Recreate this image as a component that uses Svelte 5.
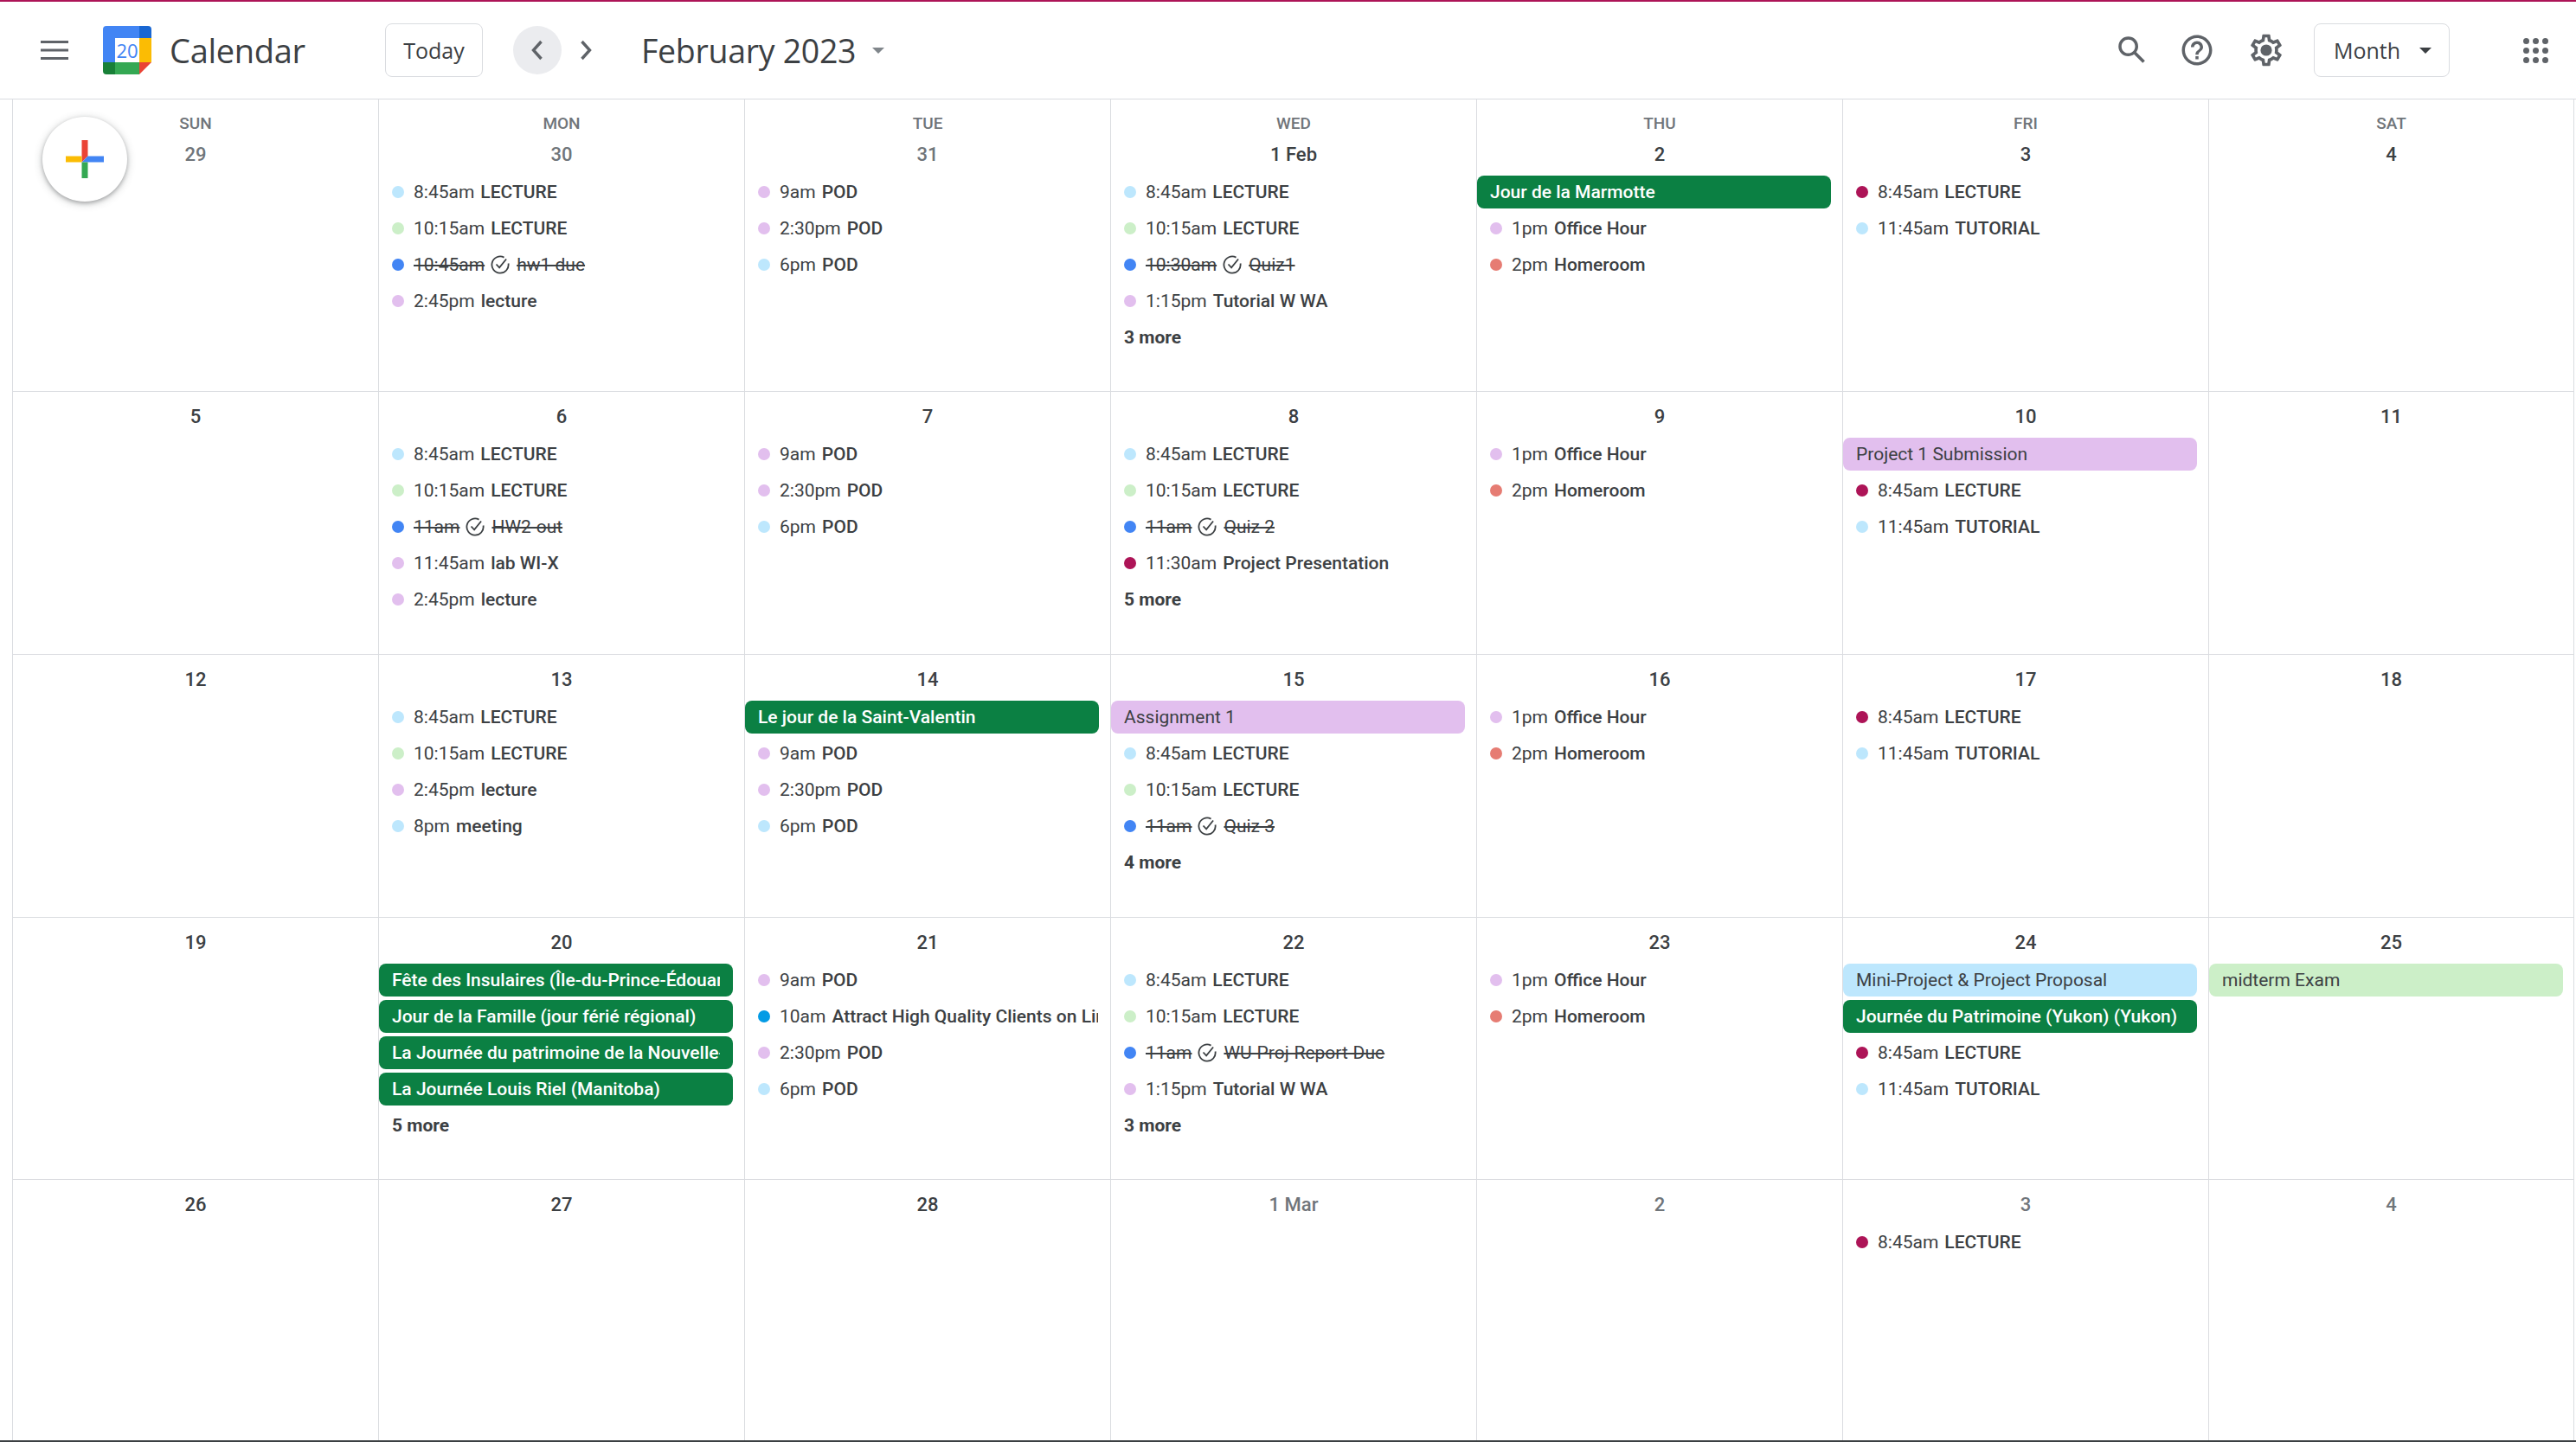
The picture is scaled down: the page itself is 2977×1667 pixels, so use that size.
<script>
    const LIGHTBLUE = '#bde7fd';
    const GREEN = '#ccefc8';
    const LILAC = '#e2bfee';
    const BANK = '#0b8043';
    const RASP = '#ad1457';
    const FLAMINGO = '#e67c73';
    const PEACOCK = '#039be5';

    const ev = (color, time, title) => ({ kind: 'event', color, time, title });
    const task = (time, title) => ({ kind: 'task', time, title });
    const chip = (color, title, dark = false) => ({ kind: 'chip', color, title, dark });
    const more = (n) => ({ kind: 'more', title: n + ' more' });

    const lec1 = ev(LIGHTBLUE, '8:45am', 'LECTURE');
    const lec2 = ev(GREEN, '10:15am', 'LECTURE');
    const lecR = ev(RASP, '8:45am', 'LECTURE');
    const tut = ev(LIGHTBLUE, '11:45am', 'TUTORIAL');
    const pod1 = ev(LILAC, '9am', 'POD');
    const pod2 = ev(LILAC, '2:30pm', 'POD');
    const pod3 = ev(LIGHTBLUE, '6pm', 'POD');
    const lecture = ev(LILAC, '2:45pm', 'lecture');
    const office = ev(LILAC, '1pm', 'Office Hour');
    const home = ev(FLAMINGO, '2pm', 'Homeroom');
    const tutW = ev(LILAC, '1:15pm', 'Tutorial W WA');

    const days = [
        { label: '29', dim: true, events: [] },
        { label: '30', dim: true, events: [lec1, lec2, task('10:45am', 'hw1 due'), lecture] },
        { label: '31', dim: true, events: [pod1, pod2, pod3] },
        { label: '1 Feb', events: [lec1, lec2, task('10:30am', 'Quiz1'), tutW, more(3)] },
        { label: '2', events: [chip(BANK, 'Jour de la Marmotte', true), office, home] },
        { label: '3', events: [lecR, tut] },
        { label: '4', events: [] },

        { label: '5', events: [] },
        { label: '6', events: [lec1, lec2, task('11am', 'HW2-out'), ev(LILAC, '11:45am', 'lab WI-X'), lecture] },
        { label: '7', events: [pod1, pod2, pod3] },
        { label: '8', events: [lec1, lec2, task('11am', 'Quiz 2'), ev(RASP, '11:30am', 'Project Presentation'), more(5)] },
        { label: '9', events: [office, home] },
        { label: '10', events: [chip(LILAC, 'Project 1 Submission'), lecR, tut] },
        { label: '11', events: [] },

        { label: '12', events: [] },
        { label: '13', events: [lec1, lec2, lecture, ev(LIGHTBLUE, '8pm', 'meeting')] },
        { label: '14', events: [chip(BANK, 'Le jour de la Saint-Valentin', true), pod1, pod2, pod3] },
        { label: '15', events: [chip(LILAC, 'Assignment 1'), lec1, lec2, task('11am', 'Quiz 3'), more(4)] },
        { label: '16', events: [office, home] },
        { label: '17', events: [lecR, tut] },
        { label: '18', events: [] },

        { label: '19', events: [] },
        { label: '20', events: [
            chip(BANK, 'Fête des Insulaires (Île-du-Prince-Édouard)', true),
            chip(BANK, 'Jour de la Famille (jour férié régional)', true),
            chip(BANK, 'La Journée du patrimoine de la Nouvelle-Écosse', true),
            chip(BANK, 'La Journée Louis Riel (Manitoba)', true),
            more(5)
        ] },
        { label: '21', events: [pod1, ev(PEACOCK, '10am', 'Attract High Quality Clients on LinkedIn'), pod2, pod3] },
        { label: '22', events: [lec1, lec2, task('11am', 'WU-Proj-Report-Due'), tutW, more(3)] },
        { label: '23', events: [office, home] },
        { label: '24', events: [chip(LIGHTBLUE, 'Mini-Project & Project Proposal'), chip(BANK, 'Journée du Patrimoine (Yukon) (Yukon)', true), lecR, tut] },
        { label: '25', events: [chip(GREEN, 'midterm Exam')] },

        { label: '26', events: [] },
        { label: '27', events: [] },
        { label: '28', events: [] },
        { label: '1 Mar', dim: true, events: [] },
        { label: '2', dim: true, events: [] },
        { label: '3', dim: true, events: [lecR] },
        { label: '4', dim: true, events: [] }
    ];

    const weekdays = ['SUN', 'MON', 'TUE', 'WED', 'THU', 'FRI', 'SAT'];
</script>

<div class="page">
    <header class="topbar">
        <button class="icon-btn menu" aria-label="Main menu">
            <svg width="32" height="22" viewBox="0 0 32 22"><path d="M0 0h32v3H0zM0 9.5h32v3H0zM0 19h32v3H0z" fill="#5f6368" /></svg>
        </button>
        <svg class="logo" width="56" height="56" viewBox="0 0 56 56">
            <path d="M42 0H4a4 4 0 0 0-4 4v38h14V14h28z" fill="#4285f4" />
            <path d="M42 0h10a4 4 0 0 1 4 4v10H42z" fill="#1967d2" />
            <rect x="42" y="14" width="14" height="28" fill="#fbbc04" />
            <rect x="14" y="42" width="28" height="14" fill="#34a853" />
            <path d="M0 42h14v14H4a4 4 0 0 1-4-4z" fill="#188038" />
            <path d="M42 42h14L42 56z" fill="#ea4335" />
            <rect x="14" y="14" width="28" height="28" fill="#fff" />
            <text x="28" y="36.5" text-anchor="middle" font-size="22" fill="#4285f4" class="logo-num">20</text>
        </svg>
        <span class="brand">Calendar</span>
        <button class="outlined today">Today</button>
        <button class="icon-btn nav active" aria-label="Previous month">
            <svg width="14" height="24" viewBox="0 0 14 24"><path d="M11.5 2 2.5 12l9 10" fill="none" stroke="#5f6368" stroke-width="3.4" /></svg>
        </button>
        <button class="icon-btn nav next" aria-label="Next month">
            <svg width="14" height="24" viewBox="0 0 14 24"><path d="M2.5 2l9 10-9 10" fill="none" stroke="#5f6368" stroke-width="3.4" /></svg>
        </button>
        <span class="month-title">February 2023</span>
        <span class="caret grey"></span>

        <div class="spacer"></div>

        <svg class="tool search" width="42" height="42" viewBox="0 0 24 24"><path fill="#5f6368" d="M20.49 19l-5.73-5.73C15.53 12.2 16 10.91 16 9.5A6.5 6.5 0 1 0 9.5 16c1.41 0 2.7-.47 3.77-1.24L19 20.49 20.49 19zM5 9.5C5 7.01 7.01 5 9.5 5S14 7.01 14 9.5 11.99 14 9.5 14 5 11.99 5 9.5z" /></svg>
        <svg class="tool help" width="42" height="42" viewBox="0 0 24 24"><path fill="#5f6368" d="M11 18h2v-2h-2v2zm1-16C6.48 2 2 6.48 2 12s4.48 10 10 10 10-4.48 10-10S17.52 2 12 2zm0 18c-4.41 0-8-3.59-8-8s3.59-8 8-8 8 3.59 8 8-3.59 8-8 8zm0-14c-2.21 0-4 1.79-4 4h2c0-1.1.9-2 2-2s2 .9 2 2c0 2-3 1.75-3 5h2c0-2.25 3-2.5 3-5 0-2.21-1.79-4-4-4z" /></svg>
        <svg class="tool gear" width="44" height="44" viewBox="0 0 24 24"><path fill="#5f6368" d="M19.43 12.98c.04-.32.07-.64.07-.98s-.03-.66-.07-.98l2.11-1.65c.19-.15.24-.42.12-.64l-2-3.46c-.12-.22-.39-.3-.61-.22l-2.49 1c-.52-.4-1.08-.73-1.69-.98l-.38-2.65A.488.488 0 0 0 14 2h-4c-.25 0-.46.18-.49.42l-.38 2.65c-.61.25-1.17.59-1.69.98l-2.49-1c-.23-.09-.49 0-.61.22l-2 3.46c-.13.22-.07.49.12.64l2.11 1.65c-.04.32-.07.65-.07.98s.03.66.07.98l-2.11 1.65c-.19.15-.24.42-.12.64l2 3.46c.12.22.39.3.61.22l2.49-1c.52.4 1.08.73 1.69.98l.38 2.65c.03.24.24.42.49.42h4c.25 0 .46-.18.49-.42l.38-2.65c.61-.25 1.17-.59 1.69-.98l2.49 1c.23.09.49 0 .61-.22l2-3.46c.12-.22.07-.49-.12-.64l-2.11-1.65zM17.45 11.27c.04.31.05.52.05.73 0 .21-.02.43-.05.73l-.14 1.13.89.7 1.08.84-.7 1.21-1.27-.51-1.04-.42-.9.68c-.43.32-.84.56-1.25.73l-1.06.43-.16 1.13-.2 1.35h-1.4l-.19-1.35-.16-1.13-1.06-.43c-.43-.18-.83-.41-1.23-.71l-.91-.7-1.06.43-1.27.51-.7-1.21 1.08-.84.89-.7-.14-1.13c-.03-.31-.05-.54-.05-.74s.02-.43.05-.73l.14-1.13-.89-.7-1.08-.84.7-1.21 1.27.51 1.04.42.9-.68c.43-.32.84-.56 1.25-.73l1.06-.43.16-1.13.2-1.35h1.39l.19 1.35.16 1.13 1.06.43c.43.18.83.41 1.23.71l.91.7 1.06-.43 1.27-.51.7 1.21-1.07.85-.89.7.14 1.13z" /><circle cx="12" cy="12" r="3.6" fill="#5f6368" /></svg>

        <button class="outlined view">Month<span class="caret"></span></button>

        <svg class="tool apps" width="29" height="29" viewBox="0 0 29 29">
            {#each [3.5, 14.5, 25.5] as cy}
                {#each [3.5, 14.5, 25.5] as cx}
                    <circle {cx} {cy} r="3.5" fill="#5f6368" />
                {/each}
            {/each}
        </svg>
    </header>

    <main class="month">
        {#each days as day, i}
            <div class="cell" class:first-row={i < 7}>
                {#if i < 7}
                    <div class="weekday">{weekdays[i]}</div>
                {/if}
                <div class="date" class:dim={day.dim}>{day.label}</div>
                {#each day.events as e}
                    <div class="slot">
                        {#if e.kind === 'chip'}
                            <div class="chip" class:dark={e.dark} style="background: {e.color}"><div class="chip-text">{e.title}</div></div>
                        {:else if e.kind === 'more'}
                            <div class="more">{e.title}</div>
                        {:else if e.kind === 'task'}
                            <div class="row">
                                <span class="dot" style="background: #4285f4"></span>
                                <s class="time">{e.time}</s>
                                <svg class="check" width="22" height="22" viewBox="0 0 22 22">
                                    <path d="M15.5 2.6A9.6 9.6 0 1 0 20.5 9.5" fill="none" stroke="#3c4043" stroke-width="1.8" />
                                    <path d="M6.5 10.5l3.6 3.8 8-9.8" fill="none" stroke="#3c4043" stroke-width="1.8" />
                                </svg>
                                <s class="title done">{e.title}</s>
                            </div>
                        {:else}
                            <div class="row">
                                <span class="dot" style="background: {e.color}"></span>
                                <span class="time">{e.time}</span>
                                <span class="title">{e.title}</span>
                            </div>
                        {/if}
                    </div>
                {/each}
            </div>
        {/each}
    </main>

    <button class="fab" aria-label="Create">
        <svg width="44" height="44" viewBox="0 0 44 44">
            <path d="M18.5 0h7v18.5l-7 7z" fill="#ea4335" />
            <path d="M25.5 18.5H44v7H18.5z" fill="#4285f4" />
            <path d="M18.5 25.5h7V44h-7z" fill="#34a853" />
            <path d="M0 18.5h18.5v7H0z" fill="#fbbc04" />
        </svg>
    </button>
</div>

<style>
    :global(body) {
        margin: 0;
        background: #fff;
    }

    .page {
        position: relative;
        width: 2977px;
        height: 1667px;
        overflow: hidden;
        display: flex;
        flex-direction: column;
        box-sizing: border-box;
        border-bottom: 2px solid #3c4043;
        font-family: Roboto, "Liberation Sans", sans-serif;
        color: #3c4043;
    }

    button {
        font-family: inherit;
        padding: 0;
        border: none;
        background: none;
    }

    .topbar {
        flex: none;
        height: 115px;
        box-sizing: border-box;
        border-top: 2px solid #ad1457;
        border-bottom: 1px solid #dadce0;
        display: flex;
        align-items: center;
        padding: 0 0 0 47px;
    }

    .icon-btn {
        display: flex;
        align-items: center;
        justify-content: center;
    }

    .menu {
        width: 32px;
        margin-right: 40px;
    }

    .logo {
        flex: none;
        margin-right: 21px;
    }

    .logo-num {
        font-family: "Open Sans", sans-serif;
    }

    .brand {
        font-family: "Open Sans", sans-serif;
        font-size: 38px;
        letter-spacing: -0.3px;
        width: 249px;
    }

    .outlined {
        height: 62px;
        box-sizing: border-box;
        border: 1px solid #dadce0;
        border-radius: 8px;
        color: #3c4043;
        font-family: "Open Sans", sans-serif;
        font-size: 25px;
        font-weight: 500;
    }

    .today {
        width: 113px;
        margin-right: 35px;
    }

    .nav {
        width: 56px;
        height: 56px;
        border-radius: 50%;
    }

    .active {
        background: #ebecef;
    }

    .month-title {
        margin-left: 36px;
        font-family: "Open Sans", sans-serif;
        font-size: 37.5px;
        letter-spacing: -0.3px;
        margin-right: 19px;
    }

    .caret {
        display: inline-block;
        width: 0;
        height: 0;
        border-left: 7px solid transparent;
        border-right: 7px solid transparent;
        border-top: 7px solid #3c4043;
    }

    .grey {
        border-top-color: #80868b;
    }

    .spacer {
        flex: 1;
    }

    .tool {
        flex: none;
    }

    .search {
        margin-right: 33px;
    }

    .help {
        margin-right: 37px;
    }

    .gear {
        margin-right: 33px;
    }

    .view {
        width: 157px;
        display: flex;
        align-items: center;
        padding-left: 22px;
        margin-right: 85px;
    }

    .view .caret {
        margin-left: 22px;
    }

    .apps {
        margin-right: 32px;
    }

    .month {
        flex: 1;
        display: grid;
        grid-template-columns: repeat(7, 423px);
        grid-template-rows: 337px 304px 304px 303px 1fr;
        margin-left: 14px;
    }

    .cell {
        min-width: 0;
        box-sizing: border-box;
        padding-top: 14px;
        border-left: 1px solid #dadce0;
        border-top: 1px solid #dadce0;
        overflow: hidden;
    }

    .cell.first-row {
        border-top: none;
        padding-top: 15px;
    }

    .cell:nth-child(7n) {
        border-right: 1px solid #dadce0;
    }

    .weekday {
        height: 34px;
        line-height: 26px;
        text-align: center;
        font-size: 19px;
        font-weight: 500;
        color: #70757a;
    }

    .date {
        height: 30px;
        line-height: 30px;
        margin-bottom: 7px;
        text-align: center;
        font-size: 22px;
        font-weight: 500;
    }

    .dim {
        color: #70757a;
    }

    .slot {
        height: 42px;
        display: flex;
        align-items: center;
    }

    .chip {
        box-sizing: border-box;
        width: 409px;
        height: 38px;
        line-height: 38px;
        padding: 0 15px;
        border-radius: 8px;
        font-size: 21px;
        font-weight: 400;
    }

    .chip-text {
        white-space: nowrap;
        overflow: hidden;
    }

    .chip.dark {
        color: #fff;
        font-weight: 500;
    }

    .more {
        padding-left: 15px;
        font-size: 21px;
        font-weight: 700;
    }

    .row {
        width: 408px;
        box-sizing: border-box;
        padding-left: 15px;
        display: flex;
        align-items: center;
        font-size: 21px;
        white-space: nowrap;
        overflow: hidden;
    }

    .dot {
        flex: none;
        width: 14px;
        height: 14px;
        border-radius: 50%;
        margin-right: 11px;
    }

    .time {
        margin-right: 7px;
    }

    .title {
        font-weight: 500;
    }

    .title.done {
        font-weight: 400;
    }

    .check {
        flex: none;
        margin-right: 8px;
    }

    .fab {
        position: absolute;
        left: 49px;
        top: 135px;
        width: 98px;
        height: 98px;
        border-radius: 50%;
        background: #fff;
        display: flex;
        align-items: center;
        justify-content: center;
        box-shadow: 0 2px 4px rgba(60, 64, 67, 0.35), 0 2px 8px 2px rgba(60, 64, 67, 0.18);
    }
</style>
